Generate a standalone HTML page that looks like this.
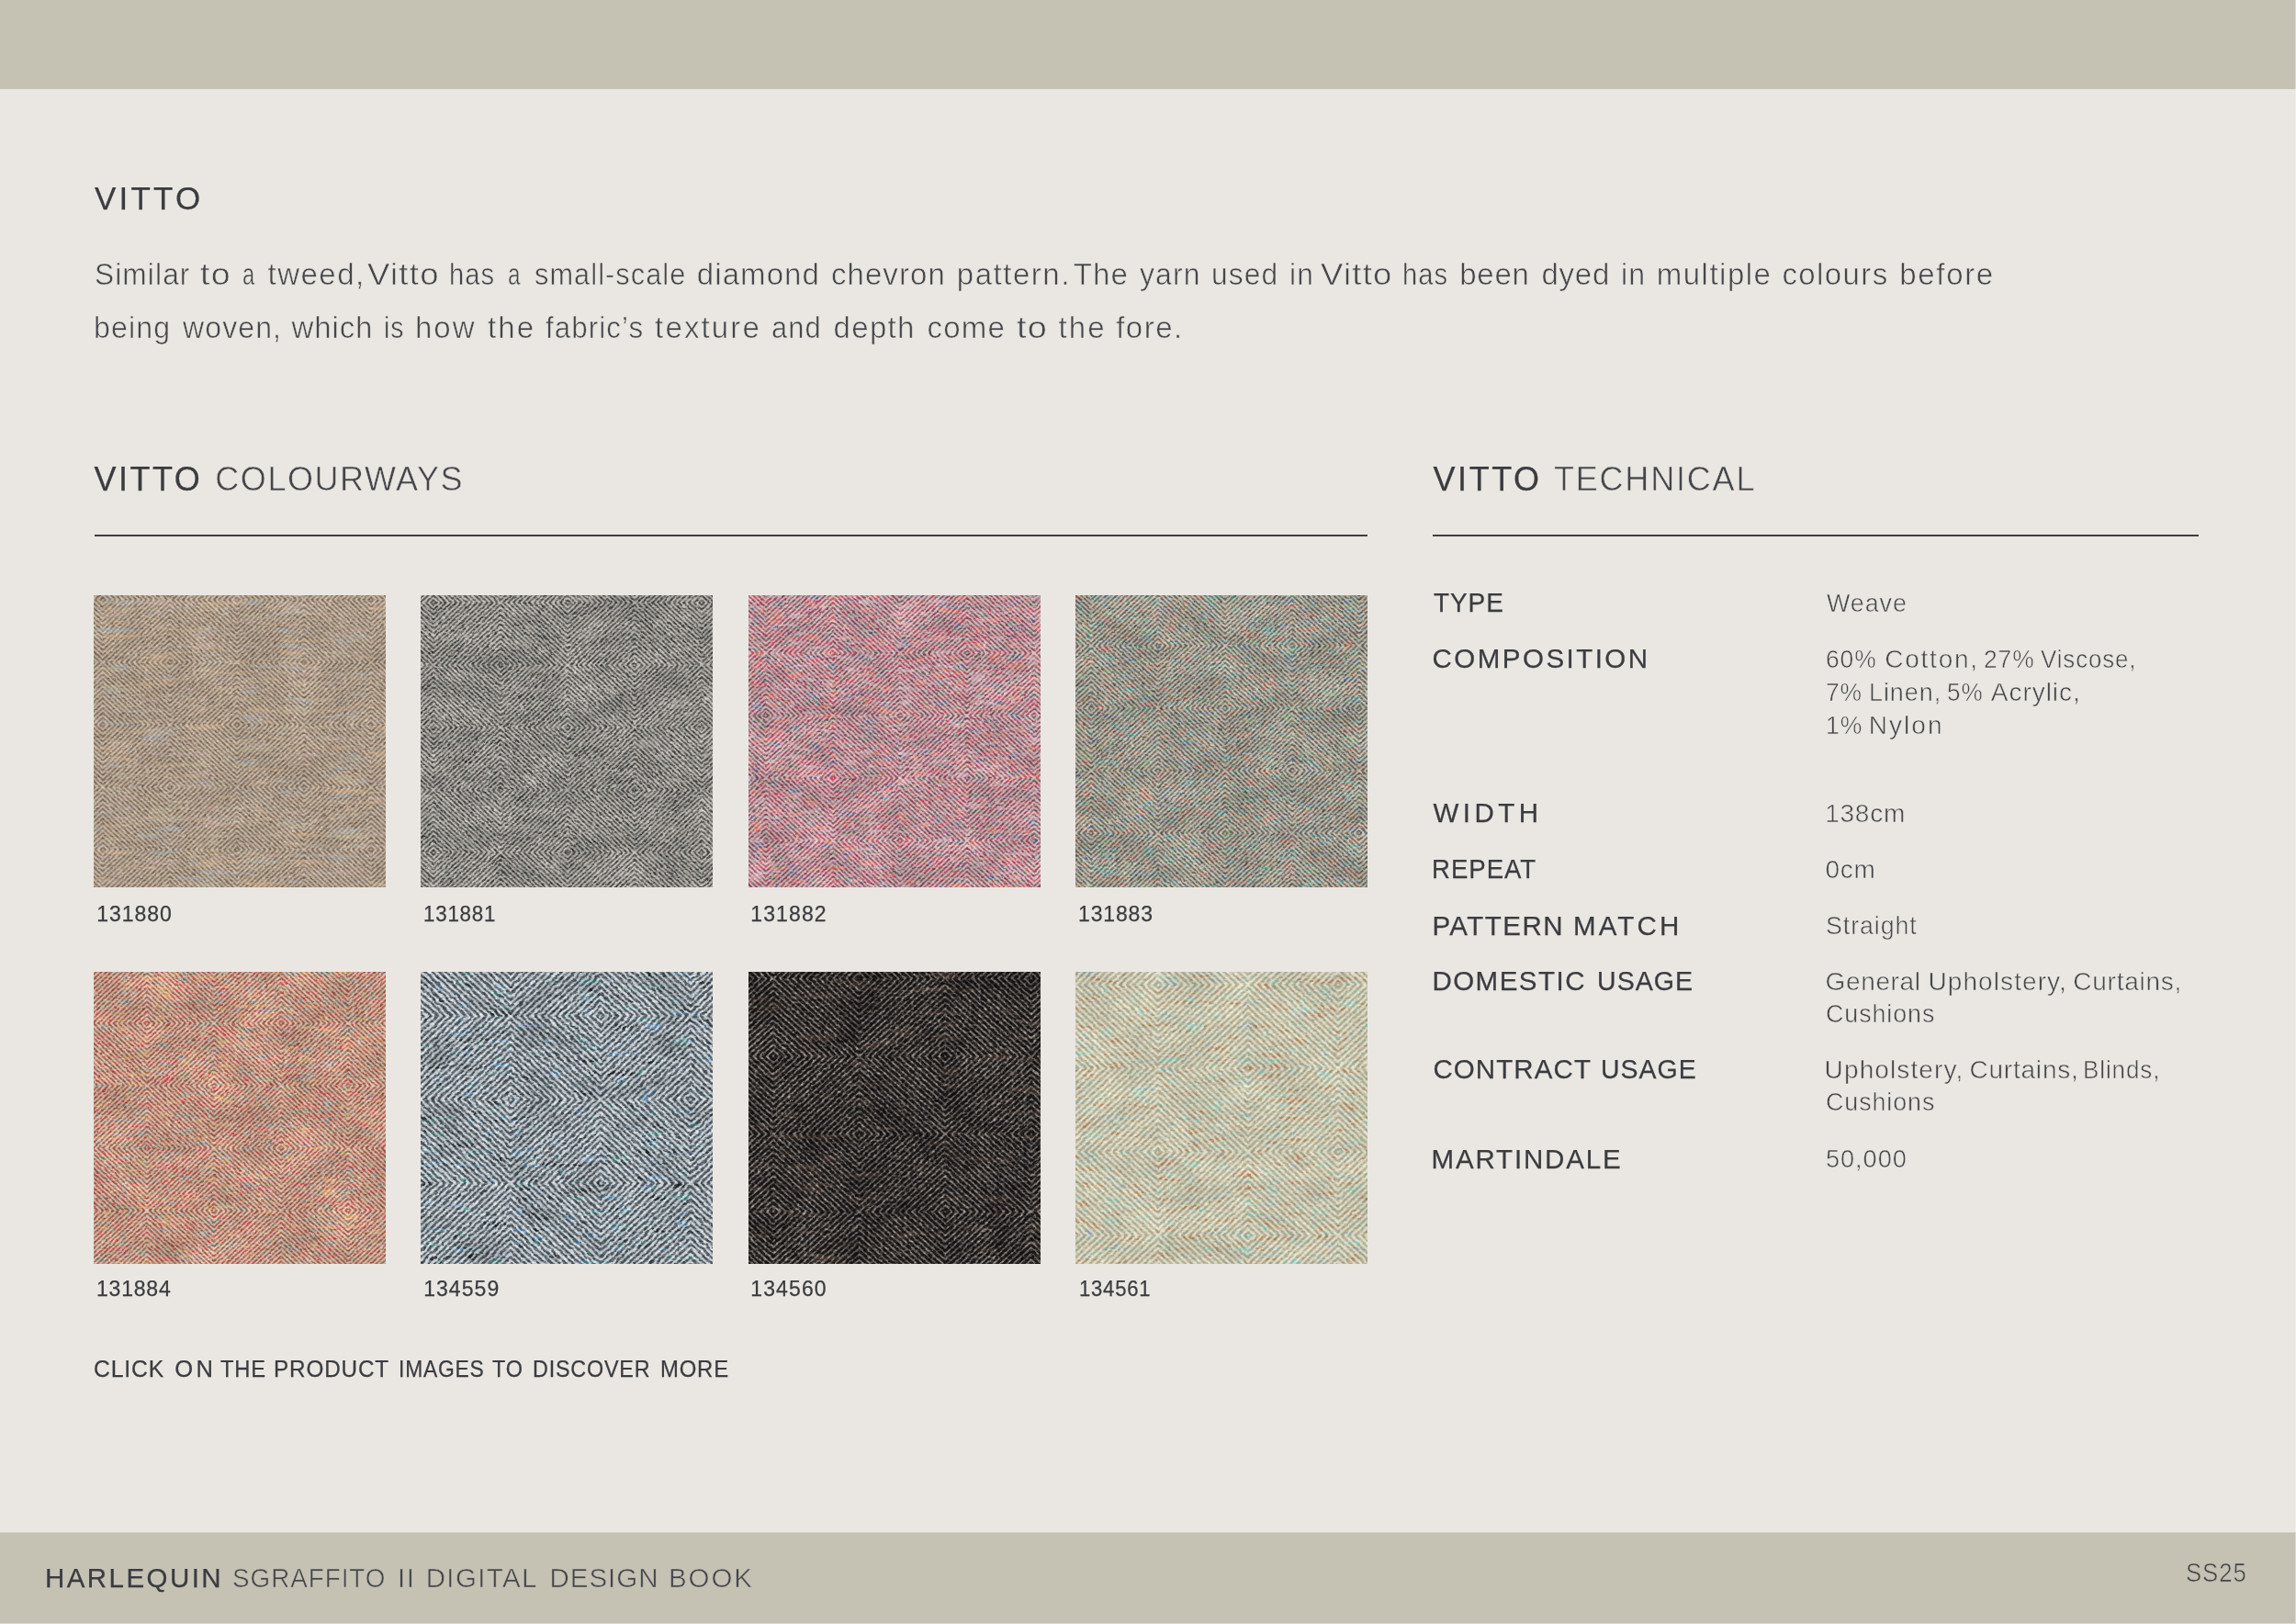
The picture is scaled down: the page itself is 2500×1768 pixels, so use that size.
<!DOCTYPE html>
<html lang="en"><head><meta charset="utf-8"><title>Vitto – Harlequin Sgraffito II Digital Design Book</title>
<style>
html,body{margin:0;padding:0;}
html{width:2500px;height:1768px;background:#FFFFFF;}
body{width:2500px;height:1768px;background:#FFFFFF;position:relative;font-family:"Liberation Sans",sans-serif;}
#page{position:absolute;left:0;top:0;width:2499px;height:1767px;background:#EAE7E2;overflow:hidden;}
#top{position:absolute;left:0;top:0;width:2499px;height:97px;background:#C5C2B4;}
#foot{position:absolute;left:0;top:1668px;width:2499px;height:99px;background:#C5C2B4;border-top:1px solid #D2CFC4;box-sizing:border-box;}
#txt{position:absolute;left:0;top:0;width:2499px;height:1767px;will-change:transform;}
.g{margin:0;padding:0;}
.t{position:absolute;display:block;transform-origin:0 0;white-space:pre;margin:0;padding:0;font-weight:400;}
.m{color:#3B3C40;-webkit-text-stroke:0.25px #3B3C40;}
.l{color:#45464A;-webkit-text-stroke:0.55px #EAE7E2;}
.lb{color:#45464A;-webkit-text-stroke:0.55px #C5C2B4;}
#er{position:absolute;left:2499px;top:0;width:1px;height:1768px;background:linear-gradient(#DCD9D1 0,#DCD9D1 97px,#F1EFEC 97px,#F1EFEC 1668px,#DCD9D1 1668px);}
#eb{position:absolute;left:0;top:1767px;width:2499px;height:1px;background:#DCD9D1;}
.rule{position:absolute;height:2px;background:#3E3F43;}
.sw{position:absolute;width:318px;height:318px;overflow:hidden;}
</style></head>
<body>
<div id="page">
<div id="top"></div>
<div id="foot"></div>
<div id="txt">
<div class="t m" style="left:103.0px;top:193.4px;font-size:35px;line-height:46px;letter-spacing:3.20px;">VITTO</div>
<p class="g"><span class="t l" style="left:102.6px;top:277.4px;font-size:33px;line-height:43px;letter-spacing:1.16px;transform:scaleX(0.9590);">Similar</span> <span class="t l" style="left:218.0px;top:277.4px;font-size:33px;line-height:43px;letter-spacing:1.16px;transform:scaleX(1.1346);">to</span> <span class="t l" style="left:263.7px;top:277.4px;font-size:33px;line-height:43px;letter-spacing:0.00px;transform:scaleX(0.7167);">a</span> <span class="t l" style="left:291.6px;top:277.4px;font-size:33px;line-height:43px;letter-spacing:1.47px;">tweed,</span> <span class="t l" style="left:399.6px;top:277.4px;font-size:33px;line-height:43px;letter-spacing:1.16px;transform:scaleX(1.1048);">Vitto</span> <span class="t l" style="left:489.1px;top:277.4px;font-size:33px;line-height:43px;letter-spacing:1.16px;transform:scaleX(0.8846);">has</span> <span class="t l" style="left:552.9px;top:277.4px;font-size:33px;line-height:43px;letter-spacing:0.00px;transform:scaleX(0.7333);">a</span> <span class="t l" style="left:581.8px;top:277.4px;font-size:33px;line-height:43px;letter-spacing:1.16px;transform:scaleX(0.9302);">small-scale</span> <span class="t l" style="left:758.8px;top:277.4px;font-size:33px;line-height:43px;letter-spacing:1.08px;">diamond</span> <span class="t l" style="left:904.9px;top:277.4px;font-size:33px;line-height:43px;letter-spacing:1.09px;">chevron</span> <span class="t l" style="left:1041.8px;top:277.4px;font-size:33px;line-height:43px;letter-spacing:1.52px;">pattern.</span> <span class="t l" style="left:1168.8px;top:277.4px;font-size:33px;line-height:43px;letter-spacing:1.14px;">The</span> <span class="t l" style="left:1240.8px;top:277.4px;font-size:33px;line-height:43px;letter-spacing:1.16px;transform:scaleX(0.9667);">yarn</span> <span class="t l" style="left:1318.9px;top:277.4px;font-size:33px;line-height:43px;letter-spacing:1.16px;transform:scaleX(0.9599);">used</span> <span class="t l" style="left:1403.6px;top:277.4px;font-size:33px;line-height:43px;letter-spacing:1.16px;transform:scaleX(0.9623);">in</span> <span class="t l" style="left:1437.9px;top:277.4px;font-size:33px;line-height:43px;letter-spacing:1.16px;transform:scaleX(1.1033);">Vitto</span> <span class="t l" style="left:1527.2px;top:277.4px;font-size:33px;line-height:43px;letter-spacing:1.16px;transform:scaleX(0.8846);">has</span> <span class="t l" style="left:1589.3px;top:277.4px;font-size:33px;line-height:43px;letter-spacing:0.71px;">been</span> <span class="t l" style="left:1678.4px;top:277.4px;font-size:33px;line-height:43px;letter-spacing:0.80px;">dyed</span> <span class="t l" style="left:1764.7px;top:277.4px;font-size:33px;line-height:43px;letter-spacing:1.16px;transform:scaleX(0.9708);">in</span> <span class="t l" style="left:1803.7px;top:277.4px;font-size:33px;line-height:43px;letter-spacing:1.51px;">multiple</span> <span class="t l" style="left:1940.4px;top:277.4px;font-size:33px;line-height:43px;letter-spacing:1.40px;">colours</span> <span class="t l" style="left:2068.3px;top:277.4px;font-size:33px;line-height:43px;letter-spacing:1.66px;">before</span></p>
<p class="g"><span class="t l" style="left:101.7px;top:334.7px;font-size:33px;line-height:43px;letter-spacing:1.16px;transform:scaleX(0.9718);">being</span> <span class="t l" style="left:199.0px;top:334.7px;font-size:33px;line-height:43px;letter-spacing:1.16px;transform:scaleX(0.9692);">woven,</span> <span class="t l" style="left:317.5px;top:334.7px;font-size:33px;line-height:43px;letter-spacing:0.90px;">which</span> <span class="t l" style="left:417.6px;top:334.7px;font-size:33px;line-height:43px;letter-spacing:1.16px;transform:scaleX(0.8583);">is</span> <span class="t l" style="left:452.0px;top:334.7px;font-size:33px;line-height:43px;letter-spacing:2.00px;">how</span> <span class="t l" style="left:531.0px;top:334.7px;font-size:33px;line-height:43px;letter-spacing:2.09px;">the</span> <span class="t l" style="left:593.8px;top:334.7px;font-size:33px;line-height:43px;letter-spacing:1.16px;transform:scaleX(0.9478);">fabric’s</span> <span class="t l" style="left:713.1px;top:334.7px;font-size:33px;line-height:43px;letter-spacing:2.14px;">texture</span> <span class="t l" style="left:839.7px;top:334.7px;font-size:33px;line-height:43px;letter-spacing:1.16px;transform:scaleX(0.9343);">and</span> <span class="t l" style="left:907.6px;top:334.7px;font-size:33px;line-height:43px;letter-spacing:1.29px;">depth</span> <span class="t l" style="left:1009.5px;top:334.7px;font-size:33px;line-height:43px;letter-spacing:1.22px;">come</span> <span class="t l" style="left:1106.5px;top:334.7px;font-size:33px;line-height:43px;letter-spacing:1.16px;transform:scaleX(1.1455);">to</span> <span class="t l" style="left:1152.5px;top:334.7px;font-size:33px;line-height:43px;letter-spacing:2.09px;">the</span> <span class="t l" style="left:1215.2px;top:334.7px;font-size:33px;line-height:43px;letter-spacing:1.48px;">fore.</span></p>
<div class="t m" style="left:102.5px;top:498.3px;font-size:36px;line-height:47px;letter-spacing:2.49px;">VITTO</div>
<div class="t l" style="left:234.3px;top:498.3px;font-size:36px;line-height:47px;letter-spacing:1.54px;">COLOURWAYS</div>
<div class="t m" style="left:1560.6px;top:498.3px;font-size:36px;line-height:47px;letter-spacing:2.51px;">VITTO</div>
<div class="t l" style="left:1691.9px;top:498.3px;font-size:36px;line-height:47px;letter-spacing:1.81px;">TECHNICAL</div>
<div class="t m" style="left:105.2px;top:980.0px;font-size:23px;line-height:30px;letter-spacing:0.95px;">131880</div>
<div class="t m" style="left:461.4px;top:980.0px;font-size:23px;line-height:30px;letter-spacing:0.81px;transform:scaleX(0.9698);">131881</div>
<div class="t m" style="left:817.3px;top:980.0px;font-size:23px;line-height:30px;letter-spacing:1.11px;">131882</div>
<div class="t m" style="left:1174.0px;top:980.0px;font-size:23px;line-height:30px;letter-spacing:0.85px;">131883</div>
<div class="t m" style="left:105.0px;top:1388.2px;font-size:23px;line-height:30px;letter-spacing:0.79px;">131884</div>
<div class="t m" style="left:461.2px;top:1388.2px;font-size:23px;line-height:30px;letter-spacing:1.05px;">134559</div>
<div class="t m" style="left:817.3px;top:1388.2px;font-size:23px;line-height:30px;letter-spacing:1.11px;">134560</div>
<div class="t m" style="left:1174.5px;top:1388.2px;font-size:23px;line-height:30px;letter-spacing:0.81px;transform:scaleX(0.9597);">134561</div>
<p class="g"><span class="t m" style="left:1560.6px;top:636.3px;font-size:29.5px;line-height:39px;letter-spacing:1.03px;transform:scaleX(0.9463);">TYPE</span></p>
<p class="g"><span class="t l" style="left:1988.6px;top:637.8px;font-size:28px;line-height:37px;letter-spacing:0.98px;transform:scaleX(0.9590);">Weave</span></p>
<p class="g"><span class="t m" style="left:1559.6px;top:697.4px;font-size:29.5px;line-height:39px;letter-spacing:2.47px;">COMPOSITION</span></p>
<p class="g"><span class="t l" style="left:1987.7px;top:698.9px;font-size:28px;line-height:37px;letter-spacing:0.98px;transform:scaleX(0.9429);">60%</span> <span class="t l" style="left:2052.3px;top:698.9px;font-size:28px;line-height:37px;letter-spacing:1.75px;">Cotton,</span> <span class="t l" style="left:2160.2px;top:698.9px;font-size:28px;line-height:37px;letter-spacing:0.98px;transform:scaleX(0.9429);">27%</span> <span class="t l" style="left:2221.9px;top:698.9px;font-size:28px;line-height:37px;letter-spacing:0.98px;transform:scaleX(0.9230);">Viscose,</span></p>
<p class="g"><span class="t l" style="left:1987.7px;top:735.0px;font-size:28px;line-height:37px;letter-spacing:0.98px;transform:scaleX(0.9431);">7%</span> <span class="t l" style="left:2034.9px;top:735.0px;font-size:28px;line-height:37px;letter-spacing:0.98px;transform:scaleX(0.9624);">Linen,</span> <span class="t l" style="left:2120.2px;top:735.0px;font-size:28px;line-height:37px;letter-spacing:0.98px;transform:scaleX(0.9329);">5%</span> <span class="t l" style="left:2167.8px;top:735.0px;font-size:28px;line-height:37px;letter-spacing:0.97px;">Acrylic,</span></p>
<p class="g"><span class="t l" style="left:1987.5px;top:771.1px;font-size:28px;line-height:37px;letter-spacing:0.98px;transform:scaleX(0.9468);">1%</span> <span class="t l" style="left:2034.8px;top:771.1px;font-size:28px;line-height:37px;letter-spacing:2.02px;">Nylon</span></p>
<p class="g"><span class="t m" style="left:1560.6px;top:865.2px;font-size:29.5px;line-height:39px;letter-spacing:4.43px;">WIDTH</span></p>
<p class="g"><span class="t l" style="left:1987.2px;top:866.7px;font-size:28px;line-height:37px;letter-spacing:0.75px;">138cm</span></p>
<p class="g"><span class="t m" style="left:1558.7px;top:926.3px;font-size:29.5px;line-height:39px;letter-spacing:1.03px;transform:scaleX(0.9354);">REPEAT</span></p>
<p class="g"><span class="t l" style="left:1987.6px;top:927.8px;font-size:28px;line-height:37px;letter-spacing:0.61px;">0cm</span></p>
<p class="g"><span class="t m" style="left:1559.4px;top:987.5px;font-size:29.5px;line-height:39px;letter-spacing:1.48px;">PATTERN</span> <span class="t m" style="left:1713.0px;top:987.5px;font-size:29.5px;line-height:39px;letter-spacing:3.15px;">MATCH</span></p>
<p class="g"><span class="t l" style="left:1987.6px;top:989.0px;font-size:28px;line-height:37px;letter-spacing:0.98px;transform:scaleX(0.9554);">Straight</span></p>
<p class="g"><span class="t m" style="left:1559.4px;top:1048.2px;font-size:29.5px;line-height:39px;letter-spacing:1.49px;">DOMESTIC</span> <span class="t m" style="left:1739.0px;top:1048.2px;font-size:29.5px;line-height:39px;letter-spacing:1.03px;transform:scaleX(0.9691);">USAGE</span></p>
<p class="g"><span class="t l" style="left:1987.6px;top:1049.7px;font-size:28px;line-height:37px;letter-spacing:0.63px;">General</span> <span class="t l" style="left:2099.5px;top:1049.7px;font-size:28px;line-height:37px;letter-spacing:1.08px;">Upholstery,</span> <span class="t l" style="left:2257.3px;top:1049.7px;font-size:28px;line-height:37px;letter-spacing:0.75px;">Curtains,</span></p>
<p class="g"><span class="t l" style="left:1987.6px;top:1085.1px;font-size:28px;line-height:37px;letter-spacing:0.98px;transform:scaleX(0.9573);">Cushions</span></p>
<p class="g"><span class="t m" style="left:1560.4px;top:1144.3px;font-size:29.5px;line-height:39px;letter-spacing:1.09px;">CONTRACT</span> <span class="t m" style="left:1742.9px;top:1144.3px;font-size:29.5px;line-height:39px;letter-spacing:1.03px;transform:scaleX(0.9653);">USAGE</span></p>
<p class="g"><span class="t l" style="left:1986.6px;top:1145.8px;font-size:28px;line-height:37px;letter-spacing:1.12px;">Upholstery,</span> <span class="t l" style="left:2144.4px;top:1145.8px;font-size:28px;line-height:37px;letter-spacing:0.80px;">Curtains,</span> <span class="t l" style="left:2268.2px;top:1145.8px;font-size:28px;line-height:37px;letter-spacing:0.98px;transform:scaleX(0.9275);">Blinds,</span></p>
<p class="g"><span class="t l" style="left:1987.6px;top:1181.4px;font-size:28px;line-height:37px;letter-spacing:0.98px;transform:scaleX(0.9573);">Cushions</span></p>
<p class="g"><span class="t m" style="left:1558.6px;top:1241.5px;font-size:29.5px;line-height:39px;letter-spacing:1.83px;">MARTINDALE</span></p>
<p class="g"><span class="t l" style="left:1987.6px;top:1243.0px;font-size:28px;line-height:37px;letter-spacing:0.98px;transform:scaleX(0.9700);">50,000</span></p>
<p class="g"><span class="t m" style="left:102.1px;top:1473.0px;font-size:25.5px;line-height:34px;letter-spacing:0.89px;transform:scaleX(0.9695);">CLICK</span> <span class="t m" style="left:190.3px;top:1473.0px;font-size:25.5px;line-height:34px;letter-spacing:3.37px;">ON</span> <span class="t m" style="left:239.9px;top:1473.0px;font-size:25.5px;line-height:34px;letter-spacing:0.89px;transform:scaleX(0.9309);">THE</span> <span class="t m" style="left:298.0px;top:1473.0px;font-size:25.5px;line-height:34px;letter-spacing:0.89px;transform:scaleX(0.9522);">PRODUCT</span> <span class="t m" style="left:434.1px;top:1473.0px;font-size:25.5px;line-height:34px;letter-spacing:0.89px;transform:scaleX(0.8953);">IMAGES</span> <span class="t m" style="left:536.2px;top:1473.0px;font-size:25.5px;line-height:34px;letter-spacing:0.89px;transform:scaleX(0.9198);">TO</span> <span class="t m" style="left:580.3px;top:1473.0px;font-size:25.5px;line-height:34px;letter-spacing:0.89px;transform:scaleX(0.9152);">DISCOVER</span> <span class="t m" style="left:718.6px;top:1473.0px;font-size:25.5px;line-height:34px;letter-spacing:0.89px;transform:scaleX(0.9361);">MORE</span></p>
<p class="g"><span class="t m" style="left:49.0px;top:1698.4px;font-size:29.5px;line-height:39px;letter-spacing:2.44px;">HARLEQUIN</span></p>
<p class="g"><span class="t lb" style="left:253.1px;top:1698.4px;font-size:29.5px;line-height:39px;letter-spacing:1.03px;transform:scaleX(0.9428);">SGRAFFITO</span> <span class="t lb" style="left:433.1px;top:1698.4px;font-size:29.5px;line-height:39px;letter-spacing:1.50px;">II</span> <span class="t lb" style="left:463.7px;top:1698.4px;font-size:29.5px;line-height:39px;letter-spacing:1.38px;">DIGITAL</span> <span class="t lb" style="left:598.5px;top:1698.4px;font-size:29.5px;line-height:39px;letter-spacing:0.98px;">DESIGN</span> <span class="t lb" style="left:727.9px;top:1698.4px;font-size:29.5px;line-height:39px;letter-spacing:1.94px;">BOOK</span></p>
<div class="t lb" style="left:2379.9px;top:1693.0px;font-size:29px;line-height:38px;letter-spacing:1.02px;transform:scaleX(0.8879);">SS25</div>
</div>
<div class="rule" style="left:102.5px;top:581.8px;width:1386.3px;"></div>
<div class="rule" style="left:1560px;top:581.8px;width:834.3px;"></div>
<svg width="0" height="0" style="position:absolute"><defs><pattern id="pS" width="146" height="136" patternUnits="userSpaceOnUse"><path d="M-2.8 0.0l2.8 -2.6 2.8 2.6 -2.8 2.6zM-8.4 0.0l8.4 -7.8 8.4 7.8 -8.4 7.8zM-14.0 0.0l14.0 -13.1 14.0 13.1 -14.0 13.1zM-19.7 0.0l19.7 -18.3 19.7 18.3 -19.7 18.3zM-25.3 0.0l25.3 -23.5 25.3 23.5 -25.3 23.5zM-30.9 0.0l30.9 -28.8 30.9 28.8 -30.9 28.8zM-36.5 0.0l36.5 -34.0 36.5 34.0 -36.5 34.0zM-42.1 0.0l42.1 -39.2 42.1 39.2 -42.1 39.2zM-47.7 0.0l47.7 -44.5 47.7 44.5 -47.7 44.5zM-53.3 0.0l53.3 -49.7 53.3 49.7 -53.3 49.7zM-59.0 0.0l59.0 -54.9 59.0 54.9 -59.0 54.9zM-64.6 0.0l64.6 -60.2 64.6 60.2 -64.6 60.2zM-70.2 0.0l70.2 -65.4 70.2 65.4 -70.2 65.4zM143.2 0.0l2.8 -2.6 2.8 2.6 -2.8 2.6zM137.6 0.0l8.4 -7.8 8.4 7.8 -8.4 7.8zM132.0 0.0l14.0 -13.1 14.0 13.1 -14.0 13.1zM126.3 0.0l19.7 -18.3 19.7 18.3 -19.7 18.3zM120.7 0.0l25.3 -23.5 25.3 23.5 -25.3 23.5zM115.1 0.0l30.9 -28.8 30.9 28.8 -30.9 28.8zM109.5 0.0l36.5 -34.0 36.5 34.0 -36.5 34.0zM103.9 0.0l42.1 -39.2 42.1 39.2 -42.1 39.2zM98.3 0.0l47.7 -44.5 47.7 44.5 -47.7 44.5zM92.7 0.0l53.3 -49.7 53.3 49.7 -53.3 49.7zM87.0 0.0l59.0 -54.9 59.0 54.9 -59.0 54.9zM81.4 0.0l64.6 -60.2 64.6 60.2 -64.6 60.2zM75.8 0.0l70.2 -65.4 70.2 65.4 -70.2 65.4zM-2.8 136.0l2.8 -2.6 2.8 2.6 -2.8 2.6zM-8.4 136.0l8.4 -7.8 8.4 7.8 -8.4 7.8zM-14.0 136.0l14.0 -13.1 14.0 13.1 -14.0 13.1zM-19.7 136.0l19.7 -18.3 19.7 18.3 -19.7 18.3zM-25.3 136.0l25.3 -23.5 25.3 23.5 -25.3 23.5zM-30.9 136.0l30.9 -28.8 30.9 28.8 -30.9 28.8zM-36.5 136.0l36.5 -34.0 36.5 34.0 -36.5 34.0zM-42.1 136.0l42.1 -39.2 42.1 39.2 -42.1 39.2zM-47.7 136.0l47.7 -44.5 47.7 44.5 -47.7 44.5zM-53.3 136.0l53.3 -49.7 53.3 49.7 -53.3 49.7zM-59.0 136.0l59.0 -54.9 59.0 54.9 -59.0 54.9zM-64.6 136.0l64.6 -60.2 64.6 60.2 -64.6 60.2zM-70.2 136.0l70.2 -65.4 70.2 65.4 -70.2 65.4zM143.2 136.0l2.8 -2.6 2.8 2.6 -2.8 2.6zM137.6 136.0l8.4 -7.8 8.4 7.8 -8.4 7.8zM132.0 136.0l14.0 -13.1 14.0 13.1 -14.0 13.1zM126.3 136.0l19.7 -18.3 19.7 18.3 -19.7 18.3zM120.7 136.0l25.3 -23.5 25.3 23.5 -25.3 23.5zM115.1 136.0l30.9 -28.8 30.9 28.8 -30.9 28.8zM109.5 136.0l36.5 -34.0 36.5 34.0 -36.5 34.0zM103.9 136.0l42.1 -39.2 42.1 39.2 -42.1 39.2zM98.3 136.0l47.7 -44.5 47.7 44.5 -47.7 44.5zM92.7 136.0l53.3 -49.7 53.3 49.7 -53.3 49.7zM87.0 136.0l59.0 -54.9 59.0 54.9 -59.0 54.9zM81.4 136.0l64.6 -60.2 64.6 60.2 -64.6 60.2zM75.8 136.0l70.2 -65.4 70.2 65.4 -70.2 65.4zM70.2 68.0l2.8 -2.6 2.8 2.6 -2.8 2.6zM64.6 68.0l8.4 -7.8 8.4 7.8 -8.4 7.8zM59.0 68.0l14.0 -13.1 14.0 13.1 -14.0 13.1zM53.3 68.0l19.7 -18.3 19.7 18.3 -19.7 18.3zM47.7 68.0l25.3 -23.5 25.3 23.5 -25.3 23.5zM42.1 68.0l30.9 -28.8 30.9 28.8 -30.9 28.8zM36.5 68.0l36.5 -34.0 36.5 34.0 -36.5 34.0zM30.9 68.0l42.1 -39.2 42.1 39.2 -42.1 39.2zM25.3 68.0l47.7 -44.5 47.7 44.5 -47.7 44.5zM19.7 68.0l53.3 -49.7 53.3 49.7 -53.3 49.7zM14.0 68.0l59.0 -54.9 59.0 54.9 -59.0 54.9zM8.4 68.0l64.6 -60.2 64.6 60.2 -64.6 60.2zM2.8 68.0l70.2 -65.4 70.2 65.4 -70.2 65.4z" fill="none" stroke="#fff" stroke-width="1.9"/></pattern><pattern id="pL" width="196" height="182" patternUnits="userSpaceOnUse"><path d="M-3.8 0.0l3.8 -3.5 3.8 3.5 -3.8 3.5zM-11.3 0.0l11.3 -10.5 11.3 10.5 -11.3 10.5zM-18.8 0.0l18.8 -17.5 18.8 17.5 -18.8 17.5zM-26.4 0.0l26.4 -24.5 26.4 24.5 -26.4 24.5zM-33.9 0.0l33.9 -31.5 33.9 31.5 -33.9 31.5zM-41.5 0.0l41.5 -38.5 41.5 38.5 -41.5 38.5zM-49.0 0.0l49.0 -45.5 49.0 45.5 -49.0 45.5zM-56.5 0.0l56.5 -52.5 56.5 52.5 -56.5 52.5zM-64.1 0.0l64.1 -59.5 64.1 59.5 -64.1 59.5zM-71.6 0.0l71.6 -66.5 71.6 66.5 -71.6 66.5zM-79.2 0.0l79.2 -73.5 79.2 73.5 -79.2 73.5zM-86.7 0.0l86.7 -80.5 86.7 80.5 -86.7 80.5zM-94.2 0.0l94.2 -87.5 94.2 87.5 -94.2 87.5zM192.2 0.0l3.8 -3.5 3.8 3.5 -3.8 3.5zM184.7 0.0l11.3 -10.5 11.3 10.5 -11.3 10.5zM177.2 0.0l18.8 -17.5 18.8 17.5 -18.8 17.5zM169.6 0.0l26.4 -24.5 26.4 24.5 -26.4 24.5zM162.1 0.0l33.9 -31.5 33.9 31.5 -33.9 31.5zM154.5 0.0l41.5 -38.5 41.5 38.5 -41.5 38.5zM147.0 0.0l49.0 -45.5 49.0 45.5 -49.0 45.5zM139.5 0.0l56.5 -52.5 56.5 52.5 -56.5 52.5zM131.9 0.0l64.1 -59.5 64.1 59.5 -64.1 59.5zM124.4 0.0l71.6 -66.5 71.6 66.5 -71.6 66.5zM116.8 0.0l79.2 -73.5 79.2 73.5 -79.2 73.5zM109.3 0.0l86.7 -80.5 86.7 80.5 -86.7 80.5zM101.8 0.0l94.2 -87.5 94.2 87.5 -94.2 87.5zM-3.8 182.0l3.8 -3.5 3.8 3.5 -3.8 3.5zM-11.3 182.0l11.3 -10.5 11.3 10.5 -11.3 10.5zM-18.8 182.0l18.8 -17.5 18.8 17.5 -18.8 17.5zM-26.4 182.0l26.4 -24.5 26.4 24.5 -26.4 24.5zM-33.9 182.0l33.9 -31.5 33.9 31.5 -33.9 31.5zM-41.5 182.0l41.5 -38.5 41.5 38.5 -41.5 38.5zM-49.0 182.0l49.0 -45.5 49.0 45.5 -49.0 45.5zM-56.5 182.0l56.5 -52.5 56.5 52.5 -56.5 52.5zM-64.1 182.0l64.1 -59.5 64.1 59.5 -64.1 59.5zM-71.6 182.0l71.6 -66.5 71.6 66.5 -71.6 66.5zM-79.2 182.0l79.2 -73.5 79.2 73.5 -79.2 73.5zM-86.7 182.0l86.7 -80.5 86.7 80.5 -86.7 80.5zM-94.2 182.0l94.2 -87.5 94.2 87.5 -94.2 87.5zM192.2 182.0l3.8 -3.5 3.8 3.5 -3.8 3.5zM184.7 182.0l11.3 -10.5 11.3 10.5 -11.3 10.5zM177.2 182.0l18.8 -17.5 18.8 17.5 -18.8 17.5zM169.6 182.0l26.4 -24.5 26.4 24.5 -26.4 24.5zM162.1 182.0l33.9 -31.5 33.9 31.5 -33.9 31.5zM154.5 182.0l41.5 -38.5 41.5 38.5 -41.5 38.5zM147.0 182.0l49.0 -45.5 49.0 45.5 -49.0 45.5zM139.5 182.0l56.5 -52.5 56.5 52.5 -56.5 52.5zM131.9 182.0l64.1 -59.5 64.1 59.5 -64.1 59.5zM124.4 182.0l71.6 -66.5 71.6 66.5 -71.6 66.5zM116.8 182.0l79.2 -73.5 79.2 73.5 -79.2 73.5zM109.3 182.0l86.7 -80.5 86.7 80.5 -86.7 80.5zM101.8 182.0l94.2 -87.5 94.2 87.5 -94.2 87.5zM94.2 91.0l3.8 -3.5 3.8 3.5 -3.8 3.5zM86.7 91.0l11.3 -10.5 11.3 10.5 -11.3 10.5zM79.2 91.0l18.8 -17.5 18.8 17.5 -18.8 17.5zM71.6 91.0l26.4 -24.5 26.4 24.5 -26.4 24.5zM64.1 91.0l33.9 -31.5 33.9 31.5 -33.9 31.5zM56.5 91.0l41.5 -38.5 41.5 38.5 -41.5 38.5zM49.0 91.0l49.0 -45.5 49.0 45.5 -49.0 45.5zM41.5 91.0l56.5 -52.5 56.5 52.5 -56.5 52.5zM33.9 91.0l64.1 -59.5 64.1 59.5 -64.1 59.5zM26.4 91.0l71.6 -66.5 71.6 66.5 -71.6 66.5zM18.8 91.0l79.2 -73.5 79.2 73.5 -79.2 73.5zM11.3 91.0l86.7 -80.5 86.7 80.5 -86.7 80.5zM3.8 91.0l94.2 -87.5 94.2 87.5 -94.2 87.5z" fill="none" stroke="#fff" stroke-width="2.6"/></pattern></defs></svg>
<svg class="sw" style="left:101.8px;top:648px" width="318" height="318" viewBox="0 0 318 318" role="img" aria-label="Vitto 131880"><defs><filter id="f1" x="-10" y="-10" width="338" height="338" filterUnits="userSpaceOnUse" color-interpolation-filters="sRGB"><feTurbulence type="fractalNoise" baseFrequency="0.18" numOctaves="2" seed="5" result="nH"/><feDisplacementMap in="SourceGraphic" in2="nH" scale="2.2" xChannelSelector="R" yChannelSelector="G" result="S"/><feConvolveMatrix in="S" order="3" kernelMatrix="0.019 0.037 0.019 0.037 0.775 0.037 0.019 0.037 0.019" divisor="1" edgeMode="duplicate" result="Sb"/><feTurbulence type="fractalNoise" baseFrequency="0.25 0.5" numOctaves="2" seed="4" result="nF"/><feColorMatrix in="nF" type="matrix" values="0 0 0 0 1 0 0 0 0 1 0 0 0 0 1 0 0 0 1 0" result="nA"/><feComposite in="Sb" in2="nA" operator="arithmetic" k1="1.8" k2="0.1" k3="0" k4="0" result="Sm"/><feColorMatrix in="nF" type="matrix" values="0 0.3 0 0 0.697 0 0.3 0 0 0.634 0 0.3 0 0 0.556 0 0 0 0 1" result="Lt"/><feColorMatrix in="nF" type="matrix" values="0.3 0 0 0 0.344 0.3 0 0 0 0.266 0.3 0 0 0 0.203 0 0 0 0 1" result="Db"/><feTurbulence type="fractalNoise" baseFrequency="0.02 0.17" numOctaves="3" seed="3" result="nS"/><feColorMatrix in="nS" type="matrix" values="0 0 0 0 0.529 0 0 0 0 0.588 0 0 0 0 0.639 6 0 0 0 -3.66" result="F0"/><feColorMatrix in="nS" type="matrix" values="0 0 0 0 0.725 0 0 0 0 0.561 0 0 0 0 0.408 0 6 0 0 -3.66" result="F1"/><feColorMatrix in="nS" type="matrix" values="0 0 0 0 0.647 0 0 0 0 0.525 0 0 0 0 0.525 0 0 6 0 -3.72" result="F2"/><feColorMatrix in="nS" type="matrix" values="0 0 0 0 0.604 0 0 0 0 0.573 0 0 0 0 0.455 0 0 0 6 -3.72" result="F3"/><feMerge result="Dk"><feMergeNode in="Db"/><feMergeNode in="F0"/><feMergeNode in="F1"/><feMergeNode in="F2"/><feMergeNode in="F3"/></feMerge><feComposite in="Dk" in2="Sm" operator="in" result="DkM"/><feComposite in="DkM" in2="Lt" operator="over" result="R"/><feTurbulence type="fractalNoise" baseFrequency="0.02 0.035" numOctaves="3" seed="6" result="nL"/><feColorMatrix in="nL" type="matrix" values="0.15 0 0 0 0.863 0.15 0 0 0 0.863 0.15 0 0 0 0.863 0 0 0 0 1" result="Mo"/><feBlend in="R" in2="Mo" mode="multiply" result="R2"/><feConvolveMatrix in="R2" order="3" kernelMatrix="0.019 0.037 0.019 0.037 0.775 0.037 0.019 0.037 0.019" divisor="1" edgeMode="duplicate"/></filter></defs><rect width="318" height="318" fill="#D8C8B4"/><g filter="url(#f1)"><g transform="translate(10 5)"><rect x="-250" y="-250" width="820" height="820" fill="url(#pS)" fill-opacity="0.9"/></g></g></svg>
<svg class="sw" style="left:457.9px;top:648px" width="318" height="318" viewBox="0 0 318 318" role="img" aria-label="Vitto 131881"><defs><filter id="f2" x="-10" y="-10" width="338" height="338" filterUnits="userSpaceOnUse" color-interpolation-filters="sRGB"><feTurbulence type="fractalNoise" baseFrequency="0.18" numOctaves="2" seed="9" result="nH"/><feDisplacementMap in="SourceGraphic" in2="nH" scale="2.6" xChannelSelector="R" yChannelSelector="G" result="S"/><feConvolveMatrix in="S" order="3" kernelMatrix="0.019 0.037 0.019 0.037 0.775 0.037 0.019 0.037 0.019" divisor="1" edgeMode="duplicate" result="Sb"/><feTurbulence type="fractalNoise" baseFrequency="0.25 0.5" numOctaves="2" seed="8" result="nF"/><feColorMatrix in="nF" type="matrix" values="0 0 0 0 1 0 0 0 0 1 0 0 0 0 1 0 0 0 1 0" result="nA"/><feComposite in="Sb" in2="nA" operator="arithmetic" k1="1.8" k2="0.1" k3="0" k4="0" result="Sm"/><feColorMatrix in="nF" type="matrix" values="0 0.4 0 0 0.627 0 0.4 0 0 0.616 0 0.4 0 0 0.588 0 0 0 0 1" result="Lt"/><feColorMatrix in="nF" type="matrix" values="0.5 0 0 0 0.04 0.5 0 0 0 0.032 0.5 0 0 0 0.025 0 0 0 0 1" result="Db"/><feTurbulence type="fractalNoise" baseFrequency="0.03 0.12" numOctaves="3" seed="7" result="nS"/><feColorMatrix in="nS" type="matrix" values="0 0 0 0 0.165 0 0 0 0 0.161 0 0 0 0 0.153 6 0 0 0 -3.72" result="F0"/><feColorMatrix in="nS" type="matrix" values="0 0 0 0 0.459 0 0 0 0 0.447 0 0 0 0 0.431 0 6 0 0 -3.72" result="F1"/><feMerge result="Dk"><feMergeNode in="Db"/><feMergeNode in="F0"/><feMergeNode in="F1"/></feMerge><feComposite in="Dk" in2="Sm" operator="in" result="DkM"/><feComposite in="DkM" in2="Lt" operator="over" result="R"/><feTurbulence type="fractalNoise" baseFrequency="0.02 0.035" numOctaves="3" seed="10" result="nL"/><feColorMatrix in="nL" type="matrix" values="0.3 0 0 0 0.765 0.3 0 0 0 0.765 0.3 0 0 0 0.765 0 0 0 0 1" result="Mo"/><feBlend in="R" in2="Mo" mode="multiply" result="R2"/><feConvolveMatrix in="R2" order="3" kernelMatrix="0.019 0.037 0.019 0.037 0.775 0.037 0.019 0.037 0.019" divisor="1" edgeMode="duplicate"/></filter></defs><rect width="318" height="318" fill="#D3D0C9"/><g filter="url(#f2)"><g transform="translate(14 8)"><rect x="-250" y="-250" width="820" height="820" fill="url(#pS)" fill-opacity="0.92"/></g></g></svg>
<svg class="sw" style="left:814.9px;top:648px" width="318" height="318" viewBox="0 0 318 318" role="img" aria-label="Vitto 131882"><defs><filter id="f3" x="-10" y="-10" width="338" height="338" filterUnits="userSpaceOnUse" color-interpolation-filters="sRGB"><feTurbulence type="fractalNoise" baseFrequency="0.18" numOctaves="2" seed="13" result="nH"/><feDisplacementMap in="SourceGraphic" in2="nH" scale="2.4" xChannelSelector="R" yChannelSelector="G" result="S"/><feConvolveMatrix in="S" order="3" kernelMatrix="0.019 0.037 0.019 0.037 0.775 0.037 0.019 0.037 0.019" divisor="1" edgeMode="duplicate" result="Sb"/><feTurbulence type="fractalNoise" baseFrequency="0.25 0.5" numOctaves="2" seed="12" result="nF"/><feColorMatrix in="nF" type="matrix" values="0 0 0 0 1 0 0 0 0 1 0 0 0 0 1 0 0 0 1 0" result="nA"/><feComposite in="Sb" in2="nA" operator="arithmetic" k1="1.8" k2="0.1" k3="0" k4="0" result="Sm"/><feColorMatrix in="nF" type="matrix" values="0 0.3 0 0 0.752 0 0.3 0 0 0.689 0 0.3 0 0 0.681 0 0 0 0 1" result="Lt"/><feColorMatrix in="nF" type="matrix" values="0.3 0 0 0 0.399 0.3 0 0 0 0.101 0.3 0 0 0 0.187 0 0 0 0 1" result="Db"/><feTurbulence type="fractalNoise" baseFrequency="0.05 0.2" numOctaves="3" seed="11" result="nS"/><feColorMatrix in="nS" type="matrix" values="0 0 0 0 0.824 0 0 0 0 0.227 0 0 0 0 0.361 7 0 0 0 -3.64" result="F0"/><feColorMatrix in="nS" type="matrix" values="0 0 0 0 0.902 0 0 0 0 0.361 0 0 0 0 0.282 0 7 0 0 -3.99" result="F1"/><feColorMatrix in="nS" type="matrix" values="0 0 0 0 0.275 0 0 0 0 0.345 0 0 0 0 0.541 0 0 7 0 -4.27" result="F2"/><feColorMatrix in="nS" type="matrix" values="0 0 0 0 0.353 0 0 0 0 0.353 0 0 0 0 0.322 0 0 0 7 -4.06" result="F3"/><feColorMatrix in="nS" type="matrix" values="0 0 0 0 0.788 0 0 0 0 0.541 0 0 0 0 0.627 -7 0 0 0 2.8" result="F4"/><feMerge result="Dk"><feMergeNode in="Db"/><feMergeNode in="F0"/><feMergeNode in="F1"/><feMergeNode in="F2"/><feMergeNode in="F3"/><feMergeNode in="F4"/></feMerge><feComposite in="Dk" in2="Sm" operator="in" result="DkM"/><feComposite in="DkM" in2="Lt" operator="over" result="R"/><feTurbulence type="fractalNoise" baseFrequency="0.02 0.035" numOctaves="3" seed="14" result="nL"/><feColorMatrix in="nL" type="matrix" values="0.25 0 0 0 0.797 0.25 0 0 0 0.797 0.25 0 0 0 0.797 0 0 0 0 1" result="Mo"/><feBlend in="R" in2="Mo" mode="multiply" result="R2"/><feConvolveMatrix in="R2" order="3" kernelMatrix="0.019 0.037 0.019 0.037 0.775 0.037 0.019 0.037 0.019" divisor="1" edgeMode="duplicate"/></filter></defs><rect width="318" height="318" fill="#E6D6D4"/><g filter="url(#f3)"><g transform="translate(19 -5)"><rect x="-250" y="-250" width="820" height="820" fill="url(#pS)" fill-opacity="0.9"/></g></g></svg>
<svg class="sw" style="left:1171.3px;top:648px" width="318" height="318" viewBox="0 0 318 318" role="img" aria-label="Vitto 131883"><defs><filter id="f4" x="-10" y="-10" width="338" height="338" filterUnits="userSpaceOnUse" color-interpolation-filters="sRGB"><feTurbulence type="fractalNoise" baseFrequency="0.18" numOctaves="2" seed="17" result="nH"/><feDisplacementMap in="SourceGraphic" in2="nH" scale="2.4" xChannelSelector="R" yChannelSelector="G" result="S"/><feConvolveMatrix in="S" order="3" kernelMatrix="0.019 0.037 0.019 0.037 0.775 0.037 0.019 0.037 0.019" divisor="1" edgeMode="duplicate" result="Sb"/><feTurbulence type="fractalNoise" baseFrequency="0.25 0.5" numOctaves="2" seed="16" result="nF"/><feColorMatrix in="nF" type="matrix" values="0 0 0 0 1 0 0 0 0 1 0 0 0 0 1 0 0 0 1 0" result="nA"/><feComposite in="Sb" in2="nA" operator="arithmetic" k1="1.8" k2="0.1" k3="0" k4="0" result="Sm"/><feColorMatrix in="nF" type="matrix" values="0 0.3 0 0 0.697 0 0.3 0 0 0.681 0 0.3 0 0 0.63 0 0 0 0 1" result="Lt"/><feColorMatrix in="nF" type="matrix" values="0.3 0 0 0 0.211 0.3 0 0 0 0.207 0.3 0 0 0 0.179 0 0 0 0 1" result="Db"/><feTurbulence type="fractalNoise" baseFrequency="0.045 0.2" numOctaves="3" seed="15" result="nS"/><feColorMatrix in="nS" type="matrix" values="0 0 0 0 0.18 0 0 0 0 0.525 0 0 0 0 0.525 7 0 0 0 -4.06" result="F0"/><feColorMatrix in="nS" type="matrix" values="0 0 0 0 0.643 0 0 0 0 0.314 0 0 0 0 0.243 0 7 0 0 -4.06" result="F1"/><feColorMatrix in="nS" type="matrix" values="0 0 0 0 0.271 0 0 0 0 0.376 0 0 0 0 0.541 0 0 7 0 -4.41" result="F2"/><feColorMatrix in="nS" type="matrix" values="0 0 0 0 0.369 0 0 0 0 0.541 0 0 0 0 0.353 0 0 0 7 -4.41" result="F3"/><feColorMatrix in="nS" type="matrix" values="0 0 0 0 0.557 0 0 0 0 0.416 0 0 0 0 0.29 0 -7 0 0 2.8" result="F4"/><feMerge result="Dk"><feMergeNode in="Db"/><feMergeNode in="F0"/><feMergeNode in="F1"/><feMergeNode in="F2"/><feMergeNode in="F3"/><feMergeNode in="F4"/></feMerge><feComposite in="Dk" in2="Sm" operator="in" result="DkM"/><feComposite in="DkM" in2="Lt" operator="over" result="R"/><feTurbulence type="fractalNoise" baseFrequency="0.02 0.035" numOctaves="3" seed="18" result="nL"/><feColorMatrix in="nL" type="matrix" values="0.25 0 0 0 0.797 0.25 0 0 0 0.797 0.25 0 0 0 0.797 0 0 0 0 1" result="Mo"/><feBlend in="R" in2="Mo" mode="multiply" result="R2"/><feConvolveMatrix in="R2" order="3" kernelMatrix="0.019 0.037 0.019 0.037 0.775 0.037 0.019 0.037 0.019" divisor="1" edgeMode="duplicate"/></filter></defs><rect width="318" height="318" fill="#D8D4C7"/><g filter="url(#f4)"><g transform="translate(90 55)"><rect x="-250" y="-250" width="820" height="820" fill="url(#pS)" fill-opacity="0.9"/></g></g></svg>
<svg class="sw" style="left:101.8px;top:1058px" width="318" height="318" viewBox="0 0 318 318" role="img" aria-label="Vitto 131884"><defs><filter id="f5" x="-10" y="-10" width="338" height="338" filterUnits="userSpaceOnUse" color-interpolation-filters="sRGB"><feTurbulence type="fractalNoise" baseFrequency="0.18" numOctaves="2" seed="21" result="nH"/><feDisplacementMap in="SourceGraphic" in2="nH" scale="2.4" xChannelSelector="R" yChannelSelector="G" result="S"/><feConvolveMatrix in="S" order="3" kernelMatrix="0.019 0.037 0.019 0.037 0.775 0.037 0.019 0.037 0.019" divisor="1" edgeMode="duplicate" result="Sb"/><feTurbulence type="fractalNoise" baseFrequency="0.25 0.5" numOctaves="2" seed="20" result="nF"/><feColorMatrix in="nF" type="matrix" values="0 0 0 0 1 0 0 0 0 1 0 0 0 0 1 0 0 0 1 0" result="nA"/><feComposite in="Sb" in2="nA" operator="arithmetic" k1="1.8" k2="0.1" k3="0" k4="0" result="Sm"/><feColorMatrix in="nF" type="matrix" values="0 0.3 0 0 0.768 0 0.3 0 0 0.701 0 0.3 0 0 0.619 0 0 0 0 1" result="Lt"/><feColorMatrix in="nF" type="matrix" values="0.3 0 0 0 0.509 0.3 0 0 0 0.164 0.3 0 0 0 0.101 0 0 0 0 1" result="Db"/><feTurbulence type="fractalNoise" baseFrequency="0.045 0.2" numOctaves="3" seed="19" result="nS"/><feColorMatrix in="nS" type="matrix" values="0 0 0 0 0.839 0 0 0 0 0.227 0 0 0 0 0.251 7 0 0 0 -3.78" result="F0"/><feColorMatrix in="nS" type="matrix" values="0 0 0 0 0.847 0 0 0 0 0.533 0 0 0 0 0.243 0 7 0 0 -4.2" result="F1"/><feColorMatrix in="nS" type="matrix" values="0 0 0 0 0.416 0 0 0 0 0.435 0 0 0 0 0.471 0 0 7 0 -4.2" result="F2"/><feColorMatrix in="nS" type="matrix" values="0 0 0 0 0.494 0 0 0 0 0.416 0 0 0 0 0.306 0 0 0 7 -4.2" result="F3"/><feMerge result="Dk"><feMergeNode in="Db"/><feMergeNode in="F0"/><feMergeNode in="F1"/><feMergeNode in="F2"/><feMergeNode in="F3"/></feMerge><feComposite in="Dk" in2="Sm" operator="in" result="DkM"/><feComposite in="DkM" in2="Lt" operator="over" result="R"/><feTurbulence type="fractalNoise" baseFrequency="0.02 0.035" numOctaves="3" seed="22" result="nL"/><feColorMatrix in="nL" type="matrix" values="0.25 0 0 0 0.797 0.25 0 0 0 0.797 0.25 0 0 0 0.797 0 0 0 0 1" result="Mo"/><feBlend in="R" in2="Mo" mode="multiply" result="R2"/><feConvolveMatrix in="R2" order="3" kernelMatrix="0.019 0.037 0.019 0.037 0.775 0.037 0.019 0.037 0.019" divisor="1" edgeMode="duplicate"/></filter></defs><rect width="318" height="318" fill="#EAD9C4"/><g filter="url(#f5)"><g transform="translate(58 56)"><rect x="-250" y="-250" width="820" height="820" fill="url(#pS)" fill-opacity="0.9"/></g></g></svg>
<svg class="sw" style="left:457.9px;top:1058px" width="318" height="318" viewBox="0 0 318 318" role="img" aria-label="Vitto 134559"><defs><filter id="f6" x="-10" y="-10" width="338" height="338" filterUnits="userSpaceOnUse" color-interpolation-filters="sRGB"><feTurbulence type="fractalNoise" baseFrequency="0.14" numOctaves="2" seed="25" result="nH"/><feDisplacementMap in="SourceGraphic" in2="nH" scale="3.4" xChannelSelector="R" yChannelSelector="G" result="S"/><feConvolveMatrix in="S" order="3" kernelMatrix="0.019 0.037 0.019 0.037 0.775 0.037 0.019 0.037 0.019" divisor="1" edgeMode="duplicate" result="Sb"/><feTurbulence type="fractalNoise" baseFrequency="0.25 0.5" numOctaves="2" seed="24" result="nF"/><feColorMatrix in="nF" type="matrix" values="0 0 0 0 1 0 0 0 0 1 0 0 0 0 1 0 0 0 1 0" result="nA"/><feComposite in="Sb" in2="nA" operator="arithmetic" k1="1.8" k2="0.1" k3="0" k4="0" result="Sm"/><feColorMatrix in="nF" type="matrix" values="0 0.5 0 0 0.574 0 0.5 0 0 0.605 0 0.5 0 0 0.621 0 0 0 0 1" result="Lt"/><feColorMatrix in="nF" type="matrix" values="0.35 0 0 0 0.103 0.35 0 0 0 0.135 0.35 0 0 0 0.166 0 0 0 0 1" result="Db"/><feTurbulence type="fractalNoise" baseFrequency="0.03 0.14" numOctaves="3" seed="23" result="nS"/><feColorMatrix in="nS" type="matrix" values="0 0 0 0 0.247 0 0 0 0 0.471 0 0 0 0 0.659 7 0 0 0 -4.69" result="F0"/><feColorMatrix in="nS" type="matrix" values="0 0 0 0 0.165 0 0 0 0 0.463 0 0 0 0 0.447 0 7 0 0 -4.62" result="F1"/><feColorMatrix in="nS" type="matrix" values="0 0 0 0 0.082 0 0 0 0 0.102 0 0 0 0 0.118 0 0 6 0 -3.6" result="F2"/><feMerge result="Dk"><feMergeNode in="Db"/><feMergeNode in="F0"/><feMergeNode in="F1"/><feMergeNode in="F2"/></feMerge><feComposite in="Dk" in2="Sm" operator="in" result="DkM"/><feComposite in="DkM" in2="Lt" operator="over" result="R"/><feTurbulence type="fractalNoise" baseFrequency="0.02 0.035" numOctaves="3" seed="26" result="nL"/><feColorMatrix in="nL" type="matrix" values="0.45 0 0 0 0.775 0.45 0 0 0 0.775 0.45 0 0 0 0.775 0 0 0 0 1" result="Mo"/><feBlend in="R" in2="Mo" mode="multiply" result="R2"/><feConvolveMatrix in="R2" order="3" kernelMatrix="0.019 0.037 0.019 0.037 0.775 0.037 0.019 0.037 0.019" divisor="1" edgeMode="duplicate"/></filter></defs><rect width="318" height="318" fill="#D2DADE"/><g filter="url(#f6)"><g transform="translate(0 48)"><rect x="-250" y="-250" width="820" height="820" fill="url(#pL)" fill-opacity="0.96"/></g></g></svg>
<svg class="sw" style="left:814.9px;top:1058px" width="318" height="318" viewBox="0 0 318 318" role="img" aria-label="Vitto 134560"><defs><filter id="f7" x="-10" y="-10" width="338" height="338" filterUnits="userSpaceOnUse" color-interpolation-filters="sRGB"><feTurbulence type="fractalNoise" baseFrequency="0.14" numOctaves="2" seed="31" result="nH"/><feDisplacementMap in="SourceGraphic" in2="nH" scale="2.6" xChannelSelector="R" yChannelSelector="G" result="S"/><feConvolveMatrix in="S" order="3" kernelMatrix="0.019 0.037 0.019 0.037 0.775 0.037 0.019 0.037 0.019" divisor="1" edgeMode="duplicate" result="Sb0"/><feComponentTransfer in="Sb0" result="Sb"><feFuncA type="linear" slope="1.6" intercept="0.0"/></feComponentTransfer><feTurbulence type="fractalNoise" baseFrequency="0.3 0.4" numOctaves="2" seed="30" result="nF"/><feColorMatrix in="nF" type="matrix" values="0 0 0 0 1 0 0 0 0 1 0 0 0 0 1 0 0 0 1 0" result="nA"/><feComposite in="Sb" in2="nA" operator="arithmetic" k1="1.8" k2="0.1" k3="0" k4="0" result="Sm"/><feColorMatrix in="nF" type="matrix" values="0 0.9 0 0 0.064 0 0.9 0 0 0.044 0 0.9 0 0 0.028 0 0 0 0 1" result="Lt"/><feColorMatrix in="nF" type="matrix" values="0.15 0 0 0 0.011 0.15 0 0 0 0 0.15 0 0 0 -0.004 0 0 0 0 1" result="Db"/><feTurbulence type="fractalNoise" baseFrequency="0.02 0.12" numOctaves="3" seed="29" result="nS"/><feColorMatrix in="nS" type="matrix" values="0 0 0 0 0.227 0 0 0 0 0.165 0 0 0 0 0.133 6 0 0 0 -3.6" result="F0"/><feMerge result="Dk"><feMergeNode in="Db"/><feMergeNode in="F0"/></feMerge><feComposite in="Dk" in2="Sm" operator="in" result="DkM"/><feComposite in="DkM" in2="Lt" operator="over" result="R"/><feTurbulence type="fractalNoise" baseFrequency="0.02 0.035" numOctaves="3" seed="32" result="nL"/><feColorMatrix in="nL" type="matrix" values="0.8 0 0 0 0.57 0.8 0 0 0 0.57 0.8 0 0 0 0.57 0 0 0 0 1" result="Mo"/><feBlend in="R" in2="Mo" mode="multiply" result="R2"/><feConvolveMatrix in="R2" order="3" kernelMatrix="0.019 0.037 0.019 0.037 0.775 0.037 0.019 0.037 0.019" divisor="1" edgeMode="duplicate"/></filter></defs><rect width="318" height="318" fill="#837E7A"/><g filter="url(#f7)"><g transform="translate(27 92) scale(0.955 0.93)"><rect x="-250" y="-250" width="820" height="820" fill="url(#pL)" fill-opacity="1"/></g></g></svg>
<svg class="sw" style="left:1171.3px;top:1058px" width="318" height="318" viewBox="0 0 318 318" role="img" aria-label="Vitto 134561"><defs><filter id="f8" x="-10" y="-10" width="338" height="338" filterUnits="userSpaceOnUse" color-interpolation-filters="sRGB"><feTurbulence type="fractalNoise" baseFrequency="0.14" numOctaves="2" seed="33" result="nH"/><feDisplacementMap in="SourceGraphic" in2="nH" scale="2.6" xChannelSelector="R" yChannelSelector="G" result="S"/><feConvolveMatrix in="S" order="3" kernelMatrix="0.019 0.037 0.019 0.037 0.775 0.037 0.019 0.037 0.019" divisor="1" edgeMode="duplicate" result="Sb"/><feTurbulence type="fractalNoise" baseFrequency="0.25 0.5" numOctaves="2" seed="32" result="nF"/><feColorMatrix in="nF" type="matrix" values="0 0 0 0 1 0 0 0 0 1 0 0 0 0 1 0 0 0 1 0" result="nA"/><feComposite in="Sb" in2="nA" operator="arithmetic" k1="1.8" k2="0.1" k3="0" k4="0" result="Sm"/><feColorMatrix in="nF" type="matrix" values="0 0.25 0 0 0.804 0 0.25 0 0 0.793 0 0.25 0 0 0.718 0 0 0 0 1" result="Lt"/><feColorMatrix in="nF" type="matrix" values="0.25 0 0 0 0.581 0.25 0 0 0 0.557 0.25 0 0 0 0.432 0 0 0 0 1" result="Db"/><feTurbulence type="fractalNoise" baseFrequency="0.035 0.16" numOctaves="3" seed="31" result="nS"/><feColorMatrix in="nS" type="matrix" values="0 0 0 0 0.486 0 0 0 0 0.784 0 0 0 0 0.722 7 0 0 0 -4.27" result="F0"/><feColorMatrix in="nS" type="matrix" values="0 0 0 0 0.71 0 0 0 0 0.514 0 0 0 0 0.353 0 7 0 0 -4.06" result="F1"/><feColorMatrix in="nS" type="matrix" values="0 0 0 0 0.616 0 0 0 0 0.702 0 0 0 0 0.604 0 0 7 0 -4.06" result="F2"/><feColorMatrix in="nS" type="matrix" values="0 0 0 0 0.561 0 0 0 0 0.651 0 0 0 0 0.659 0 0 0 7 -4.48" result="F3"/><feMerge result="Dk"><feMergeNode in="Db"/><feMergeNode in="F0"/><feMergeNode in="F1"/><feMergeNode in="F2"/><feMergeNode in="F3"/></feMerge><feComposite in="Dk" in2="Sm" operator="in" result="DkM"/><feComposite in="DkM" in2="Lt" operator="over" result="R"/><feTurbulence type="fractalNoise" baseFrequency="0.02 0.035" numOctaves="3" seed="34" result="nL"/><feColorMatrix in="nL" type="matrix" values="0.15 0 0 0 0.863 0.15 0 0 0 0.863 0.15 0 0 0 0.863 0 0 0 0 1" result="Mo"/><feBlend in="R" in2="Mo" mode="multiply" result="R2"/><feConvolveMatrix in="R2" order="3" kernelMatrix="0.019 0.037 0.019 0.037 0.775 0.037 0.019 0.037 0.019" divisor="1" edgeMode="duplicate"/></filter></defs><rect width="318" height="318" fill="#EDEAD7"/><g filter="url(#f8)"><g transform="translate(90 14)"><rect x="-250" y="-250" width="820" height="820" fill="url(#pL)" fill-opacity="0.9"/></g></g></svg>
</div>
<div id="er"></div><div id="eb"></div>
</body></html>
